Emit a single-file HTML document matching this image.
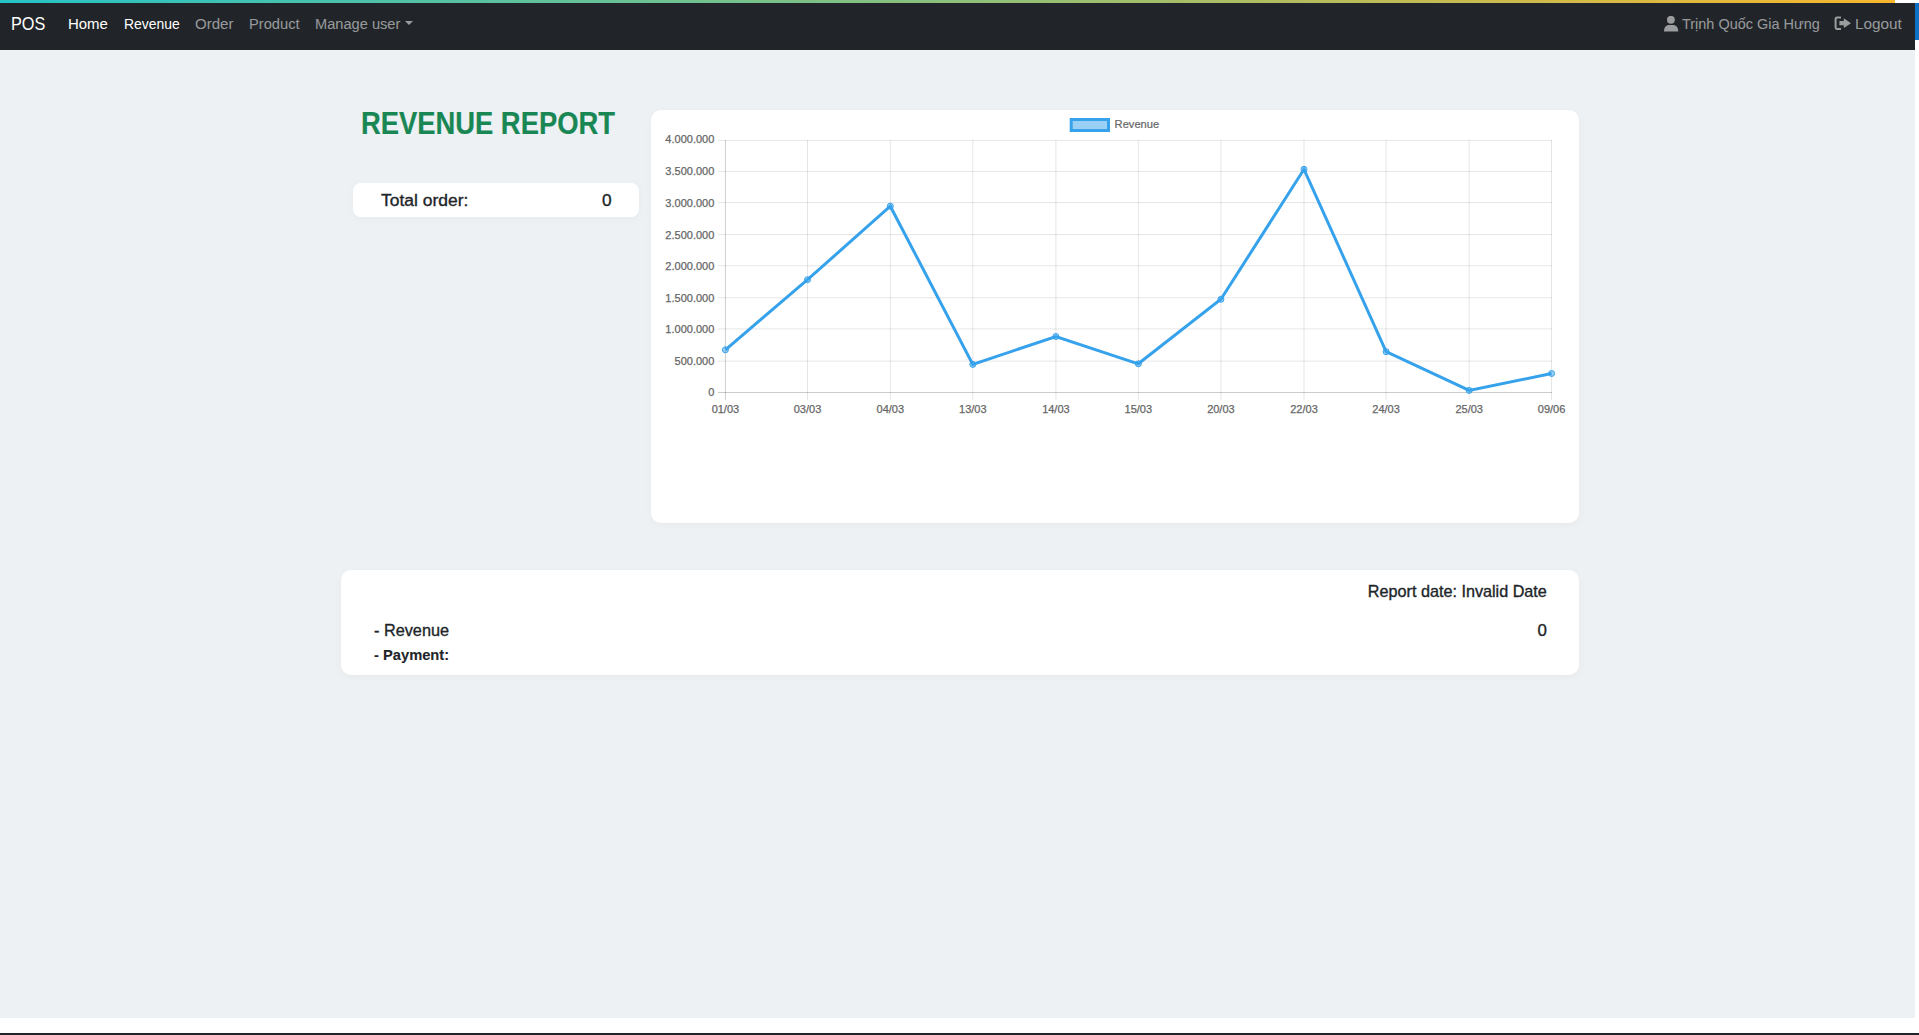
<!DOCTYPE html>
<html lang="en">
<head>
<meta charset="utf-8">
<title>POS - Revenue report</title>
<style>
  html, body { margin:0; padding:0; }
  body { width:1919px; height:1035px; position:relative; overflow:hidden; background:#ffffff;
         font-family:"Liberation Sans", sans-serif; color:#212529; }
  .t { position:absolute; white-space:nowrap; line-height:1; transform-origin:0 0; -webkit-text-stroke:0.35px currentColor; }
  #topbar { position:absolute; left:0; top:0; width:1895px; height:3px;
            background:linear-gradient(90deg,#26c3c6 0%,#8cc07b 50%,#f7b72d 100%); }
  #nav { position:absolute; left:0; top:3px; width:1915px; height:47px; background:#212529; }
  #navedge { position:absolute; left:1915px; top:3px; width:4px; height:37px; background:#0a71c4; }
  #main { position:absolute; left:0; top:50px; width:1915px; height:968px; background:#eef1f4; }
  #botbar { position:absolute; left:0; top:1033px; width:1919px; height:2px; background:#22252b; }
  .card { position:absolute; background:#fff; box-shadow:0 2px 8px rgba(0,0,0,.03); }
  .nl { color:rgba(255,255,255,.55); font-size:16px; -webkit-text-stroke:0; }
  .na { color:#fff; font-size:16px; -webkit-text-stroke:0; }
</style>
</head>
<body>
<div id="topbar"></div>
<nav id="nav">
  <span class="t na" style="left:11.1px;top:11.2px;font-size:19px;transform:scaleX(0.855)">POS</span>
  <span class="t na" style="left:67.9px;top:13.6px;transform:scale(0.935,0.92)">Home</span>
  <span class="t na" style="left:123.8px;top:13.6px;transform:scale(0.87,0.92)">Revenue</span>
  <span class="t nl" style="left:194.6px;top:13.6px;transform:scale(0.941,0.92)">Order</span>
  <span class="t nl" style="left:248.6px;top:13.6px;transform:scale(0.918,0.92)">Product</span>
  <span class="t nl" style="left:315.2px;top:13.6px;transform:scale(0.914,0.92)">Manage user</span>
  <svg style="position:absolute;left:405px;top:18px" width="8" height="4" viewBox="0 0 8 4"><path d="M0 0H8L4 4Z" fill="rgba(255,255,255,.55)"/></svg>
  <svg style="position:absolute;left:1664px;top:12.6px" width="15" height="16" viewBox="0 0 15 16"><circle cx="6.9" cy="3.8" r="3.9" fill="rgba(255,255,255,.55)"/><path d="M0 15.4C0 11.5 2 9.1 5.2 9.1H9C12.2 9.1 14.2 11.5 14.2 15.4Z" fill="rgba(255,255,255,.55)"/></svg>
  <span class="t nl" style="left:1681.6px;top:13.6px;transform:scale(0.904,0.92)">Trịnh Quốc Gia Hưng</span>
  <svg style="position:absolute;left:1834px;top:13px" width="18" height="15" viewBox="0 0 18 15"><path d="M7 1.6H2.9Q1.6 1.6 1.6 2.9V11.6Q1.6 12.9 2.9 12.9H7" fill="none" stroke="rgba(255,255,255,.55)" stroke-width="2"/><path d="M5.4 5.1H9.8V2.2L17 7.2L9.8 12.1V9.2H5.4Z" fill="rgba(255,255,255,.55)"/></svg>
  <span class="t nl" style="left:1854.6px;top:13.6px;transform:scale(0.958,0.92)">Logout</span>
</nav>
<div id="navedge"></div>
<div id="main"></div>
<div id="botbar"></div>

<span class="t" style="left:360.5px;top:107.1px;font-size:32px;font-weight:bold;color:#198754;-webkit-text-stroke:0.2px #198754;transform:scaleX(0.855)">REVENUE REPORT</span>

<div class="card" style="left:353px;top:183px;width:286px;height:34px;border-radius:8px"></div>
<span class="t" style="left:381.2px;top:192px;font-size:17.3px;transform:scaleX(1.01)">Total order:</span>
<span class="t" style="left:602.1px;top:192px;font-size:17.3px">0</span>

<div class="card" style="left:651px;top:110px;width:928px;height:413px;border-radius:10px"></div>
<svg style="position:absolute;left:0;top:0" width="1919" height="1035" viewBox="0 0 1919 1035" id="chart">
  <g font-family="Liberation Sans, sans-serif" font-size="11" fill="#666">
    <rect x="1071.2" y="119.5" width="37.3" height="11" fill="rgba(54,162,235,0.5)" stroke="#36a2eb" stroke-width="3"/>
    <text x="1114.6" y="127.7" stroke="#666" stroke-width="0.2" textLength="44.6" lengthAdjust="spacingAndGlyphs">Revenue</text>
  </g>
  <g stroke="rgba(0,0,0,0.1)" stroke-width="1" fill="none">
    <path d="M718 140.4H1552M718 171.4H1552M718 202.6H1552M718 234.6H1552M718 265.8H1552M718 297.8H1552M718 328.9H1552M718 361.1H1552"/>
    <path d="M807.5 140V400M890.3 140V400M972.8 140V400M1055.9 140V400M1138.3 140V400M1220.9 140V400M1304 140V400M1386.1 140V400M1469.2 140V400M1551.5 140V400"/>
  </g>
  <g stroke="rgba(0,0,0,0.2)" stroke-width="1" fill="none">
    <path d="M718 392.5H1552M725.4 140V400"/>
  </g>
  <g font-family="Liberation Sans, sans-serif" font-size="11" fill="#666" stroke="#666" stroke-width="0.25" text-anchor="end">
    <text x="714.3" y="142.7">4.000.000</text>
    <text x="714.3" y="175.4">3.500.000</text>
    <text x="714.3" y="206.9">3.000.000</text>
    <text x="714.3" y="238.5">2.500.000</text>
    <text x="714.3" y="270.0">2.000.000</text>
    <text x="714.3" y="301.6">1.500.000</text>
    <text x="714.3" y="333.1">1.000.000</text>
    <text x="714.3" y="364.6">500.000</text>
    <text x="714.3" y="396.2">0</text>
  </g>
  <g font-family="Liberation Sans, sans-serif" font-size="11" fill="#666" stroke="#666" stroke-width="0.25" text-anchor="middle">
    <text x="725.4" y="413">01/03</text>
    <text x="807.5" y="413">03/03</text>
    <text x="890.3" y="413">04/03</text>
    <text x="972.8" y="413">13/03</text>
    <text x="1055.9" y="413">14/03</text>
    <text x="1138.3" y="413">15/03</text>
    <text x="1220.9" y="413">20/03</text>
    <text x="1304" y="413">22/03</text>
    <text x="1386.1" y="413">24/03</text>
    <text x="1469.2" y="413">25/03</text>
    <text x="1551.6" y="413">09/06</text>
  </g>
  <polyline points="725.4,349.8 807.5,279.7 890.3,206.2 972.8,364.4 1055.9,336.5 1138.3,363.8 1220.9,299.3 1304,169.3 1386.1,351.7 1469.2,390.4 1551.6,373.5" fill="none" stroke="#36a2eb" stroke-width="3" stroke-linejoin="miter"/>
  <g fill="rgba(54,162,235,0.5)" stroke="#36a2eb" stroke-width="1">
    <circle cx="725.4" cy="349.8" r="3"/><circle cx="807.5" cy="279.7" r="3"/><circle cx="890.3" cy="206.2" r="3"/><circle cx="972.8" cy="364.4" r="3"/><circle cx="1055.9" cy="336.5" r="3"/><circle cx="1138.3" cy="363.8" r="3"/><circle cx="1220.9" cy="299.3" r="3"/><circle cx="1304" cy="169.3" r="3"/><circle cx="1386.1" cy="351.7" r="3"/><circle cx="1469.2" cy="390.4" r="3"/><circle cx="1551.6" cy="373.5" r="3"/>
  </g>
</svg>

<div class="card" style="left:341px;top:570px;width:1238px;height:105px;border-radius:10px"></div>
<span class="t" style="left:1367.8px;top:582.8px;font-size:16.2px">Report date: Invalid Date</span>
<span class="t" style="left:374.1px;top:622.5px;font-size:16.9px;transform:scaleX(0.963)">- Revenue</span>
<span class="t" style="left:1537.6px;top:622.5px;font-size:16.9px">0</span>
<span class="t" style="left:374.1px;top:646.7px;font-size:15.4px;font-weight:bold;-webkit-text-stroke:0.1px currentColor;transform:scaleX(0.955)">- Payment:</span>
</body>
</html>
